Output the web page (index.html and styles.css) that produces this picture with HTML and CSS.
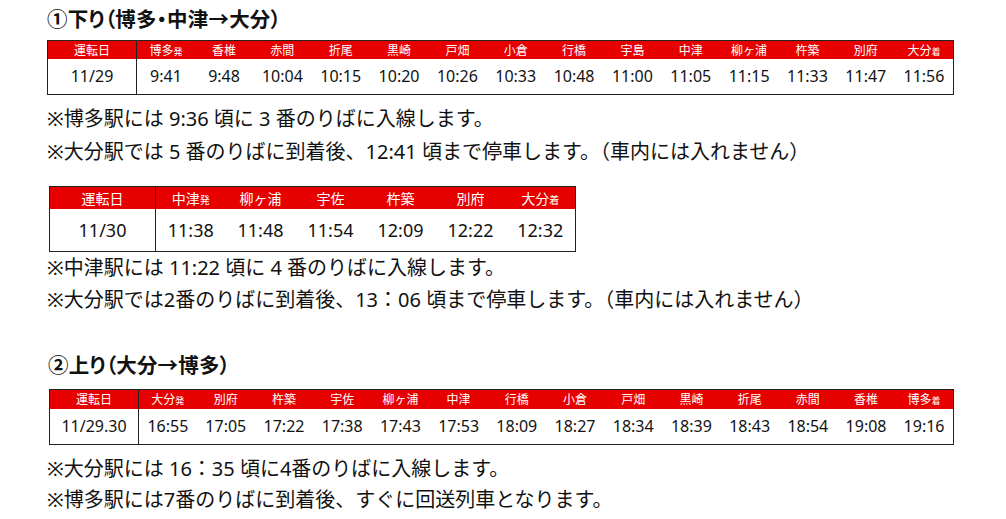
FILE: index.html
```html
<!DOCTYPE html>
<html lang="ja">
<head>
<meta charset="utf-8">
<link rel="stylesheet" href="styles.css">
</head>
<body>
<div class="page">
  <h2 class="title t1">①下り（博多・中津→大分）</h2>
  <table class="tt tt1">
    <colgroup><col class="c-date1"><col span="14"></colgroup>
    <tr class="hd">
      <th class="date">運転日</th>
      <th>博多<small>発</small></th><th>香椎</th><th>赤間</th><th>折尾</th><th>黒崎</th><th>戸畑</th><th>小倉</th><th>行橋</th><th>宇島</th><th>中津</th><th>柳ヶ浦</th><th>杵築</th><th>別府</th><th>大分<small>着</small></th>
    </tr>
    <tr class="bd">
      <td class="date">11/29</td>
      <td>9:41</td><td>9:48</td><td>10:04</td><td>10:15</td><td>10:20</td><td>10:26</td><td>10:33</td><td>10:48</td><td>11:00</td><td>11:05</td><td>11:15</td><td>11:33</td><td>11:47</td><td>11:56</td>
    </tr>
  </table>
  <div class="notes n1">
    <p>※博多駅には 9:36 頃に 3 番のりばに入線します。</p>
    <p>※大分駅では 5 番のりばに到着後、12:41 頃まで停車します。（車内には入れません）</p>
  </div>

  <table class="tt tt2">
    <colgroup><col class="c-date2"><col span="6"></colgroup>
    <tr class="hd">
      <th class="date">運転日</th>
      <th>中津<small>発</small></th><th>柳ヶ浦</th><th>宇佐</th><th>杵築</th><th>別府</th><th>大分<small>着</small></th>
    </tr>
    <tr class="bd">
      <td class="date">11/30</td>
      <td>11:38</td><td>11:48</td><td>11:54</td><td>12:09</td><td>12:22</td><td>12:32</td>
    </tr>
  </table>
  <div class="notes n2">
    <p>※中津駅には 11:22 頃に 4 番のりばに入線します。</p>
    <p>※大分駅では2番のりばに到着後、13：06 頃まで停車します。（車内には入れません）</p>
  </div>

  <h2 class="title t2">②上り（大分→博多）</h2>
  <table class="tt tt3">
    <colgroup><col class="c-date3"><col span="14"></colgroup>
    <tr class="hd">
      <th class="date">運転日</th>
      <th>大分<small>発</small></th><th>別府</th><th>杵築</th><th>宇佐</th><th>柳ヶ浦</th><th>中津</th><th>行橋</th><th>小倉</th><th>戸畑</th><th>黒崎</th><th>折尾</th><th>赤間</th><th>香椎</th><th>博多<small>着</small></th>
    </tr>
    <tr class="bd">
      <td class="date">11/29.30</td>
      <td>16:55</td><td>17:05</td><td>17:22</td><td>17:38</td><td>17:43</td><td>17:53</td><td>18:09</td><td>18:27</td><td>18:34</td><td>18:39</td><td>18:43</td><td>18:54</td><td>19:08</td><td>19:16</td>
    </tr>
  </table>
  <div class="notes n3">
    <p>※大分駅には 16：35 頃に4番のりばに入線します。</p>
    <p>※博多駅には7番のりばに到着後、すぐに回送列車となります。</p>
  </div>
</div>
</body>
</html>
```

FILE: styles.css
```css
* { box-sizing: border-box; }
html, body { margin: 0; padding: 0; background: #fff; }
body {
  font-family: "Noto Sans", "Noto Sans CJK JP", sans-serif;
  color: #111;
  width: 1006px;
  height: 519px;
  overflow: hidden;
}
.page { padding: 0 0 0 47px; }

.title {
  margin: 0;
  font-size: 20.5px;
  font-weight: 700;
  line-height: 30px;
  font-feature-settings: "palt";
  letter-spacing: 0.2px;
}
.t1 { padding-top: 4px; height: 40px; }
.t2 { margin-top: 34px; height: 39px; padding-left: 1px; }

.tt {
  border-collapse: collapse;
  table-layout: fixed;
  border: 1px solid #222;
}
.tt th, .tt td { padding: 0; text-align: center; white-space: nowrap; overflow: hidden; }
.tt .hd { background: #e60000; color: #fff; }
.tt th {
  font-family: "Noto Sans CJK JP", sans-serif;
  font-size: 12px;
  font-weight: 400;
  line-height: 1;
}
.tt th small { font-size: 9px; }
.tt td { font-size: 16px; color: #111; }
.tt .date { border-right: 1px solid #222; }

.tt1 { width: 907px; }
.tt1 .hd { height: 18px; }
.tt1 .bd { height: 36px; }
.c-date1 { width: 89px; }

.tt2 { width: 527px; margin-left: 2px; margin-top: 18px; }
.tt2 .hd { height: 22px; }
.tt2 .hd th { font-size: 14px; }
.tt2 .hd th small { font-size: 10px; }
.tt2 .bd { height: 43px; }
.tt2 td { font-size: 18px; }
.c-date2 { width: 106px; }

.tt3 { width: 905px; margin-left: 2px; }
.tt3 .hd { height: 19px; }
.tt3 .bd { height: 36px; }
.c-date3 { width: 89px; }

.notes p {
  margin: 0;
  font-size: 20px;
  line-height: 33px;
  white-space: nowrap;
}
.n1 { margin-top: 7px; }
.n2 p { line-height: 32px; }
.n3 { margin-top: 8px; }
.n3 p { line-height: 31px; }
```
